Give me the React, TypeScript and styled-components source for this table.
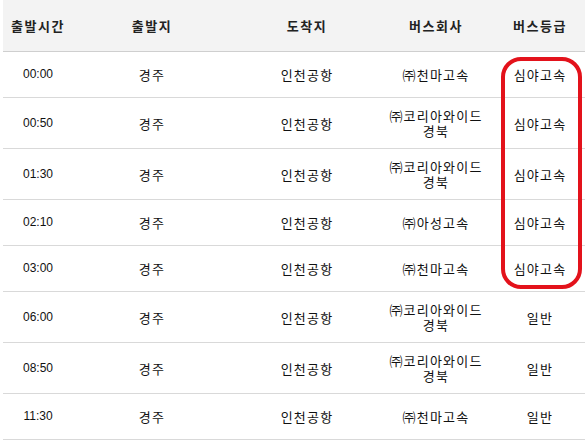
import React from "react";
import styled, { createGlobalStyle } from "styled-components";

const Global = createGlobalStyle`
  html, body { margin: 0; padding: 0; background: #fff; overflow: hidden; }
  body { font-family: "Noto Sans CJK KR", "Noto Sans", sans-serif; }
`;

const Wrap = styled.div`
  position: relative;
  margin-left: 3px;
  width: 588px;
`;

const Table = styled.table`
  width: 588px;
  table-layout: fixed;
  border-collapse: separate;
  border-spacing: 0;
  color: #111;
`;

const HeadCell = styled.th<{ $w: number }>`
  width: ${(p) => p.$w}px;
  padding: 18px 0;
  line-height: 15px;
  font-size: 13px;
  font-weight: 700;
  letter-spacing: 1.5px;
  color: #222;
  background: #f3f3f3;
  border-bottom: 1px solid #cfcfcf;
  text-align: center;
`;

const Row = styled.tr`
  height: 46px;
`;

const Cell = styled.td<{ $num?: boolean }>`
  padding: 10px 0;
  line-height: 15px;
  font-size: ${(p) => (p.$num ? "12px" : "13px")};
  letter-spacing: ${(p) => (p.$num ? "0" : "1.2px")};
  font-family: ${(p) =>
    p.$num ? `"Liberation Sans", "Noto Sans CJK KR", sans-serif` : `"Noto Sans CJK KR", sans-serif`};
  word-break: keep-all;
  text-align: center;
  vertical-align: middle;
  border-bottom: 1px solid #d9d9d9;
`;

const Highlight = styled.div`
  position: absolute;
  left: 498px;
  top: 57px;
  width: 81px;
  height: 232px;
  box-sizing: border-box;
  border: 4px solid #e3121b;
  border-radius: 20px;
  pointer-events: none;
`;

const cols = [
  { label: "출발시간", w: 70 },
  { label: "출발지", w: 158 },
  { label: "도착지", w: 152 },
  { label: "버스회사", w: 106 },
  { label: "버스등급", w: 102 },
];

const rows = [
  ["00:00", "㈜천마고속", "심야고속"],
  ["00:50", "㈜코리아와이드 경북", "심야고속"],
  ["01:30", "㈜코리아와이드 경북", "심야고속"],
  ["02:10", "㈜아성고속", "심야고속"],
  ["03:00", "㈜천마고속", "심야고속"],
  ["06:00", "㈜코리아와이드 경북", "일반"],
  ["08:50", "㈜코리아와이드 경북", "일반"],
  ["11:30", "㈜천마고속", "일반"],
];

export default function App() {
  return (
    <>
      <Global />
      <Wrap>
        <Table>
          <thead>
            <tr>
              {cols.map((c) => (
                <HeadCell key={c.label} $w={c.w}>
                  {c.label}
                </HeadCell>
              ))}
            </tr>
          </thead>
          <tbody>
            {rows.map(([time, company, grade]) => (
              <Row key={time}>
                <Cell $num>{time}</Cell>
                <Cell>경주</Cell>
                <Cell>인천공항</Cell>
                <Cell>{company}</Cell>
                <Cell>{grade}</Cell>
              </Row>
            ))}
          </tbody>
        </Table>
        <Highlight />
      </Wrap>
    </>
  );
}
